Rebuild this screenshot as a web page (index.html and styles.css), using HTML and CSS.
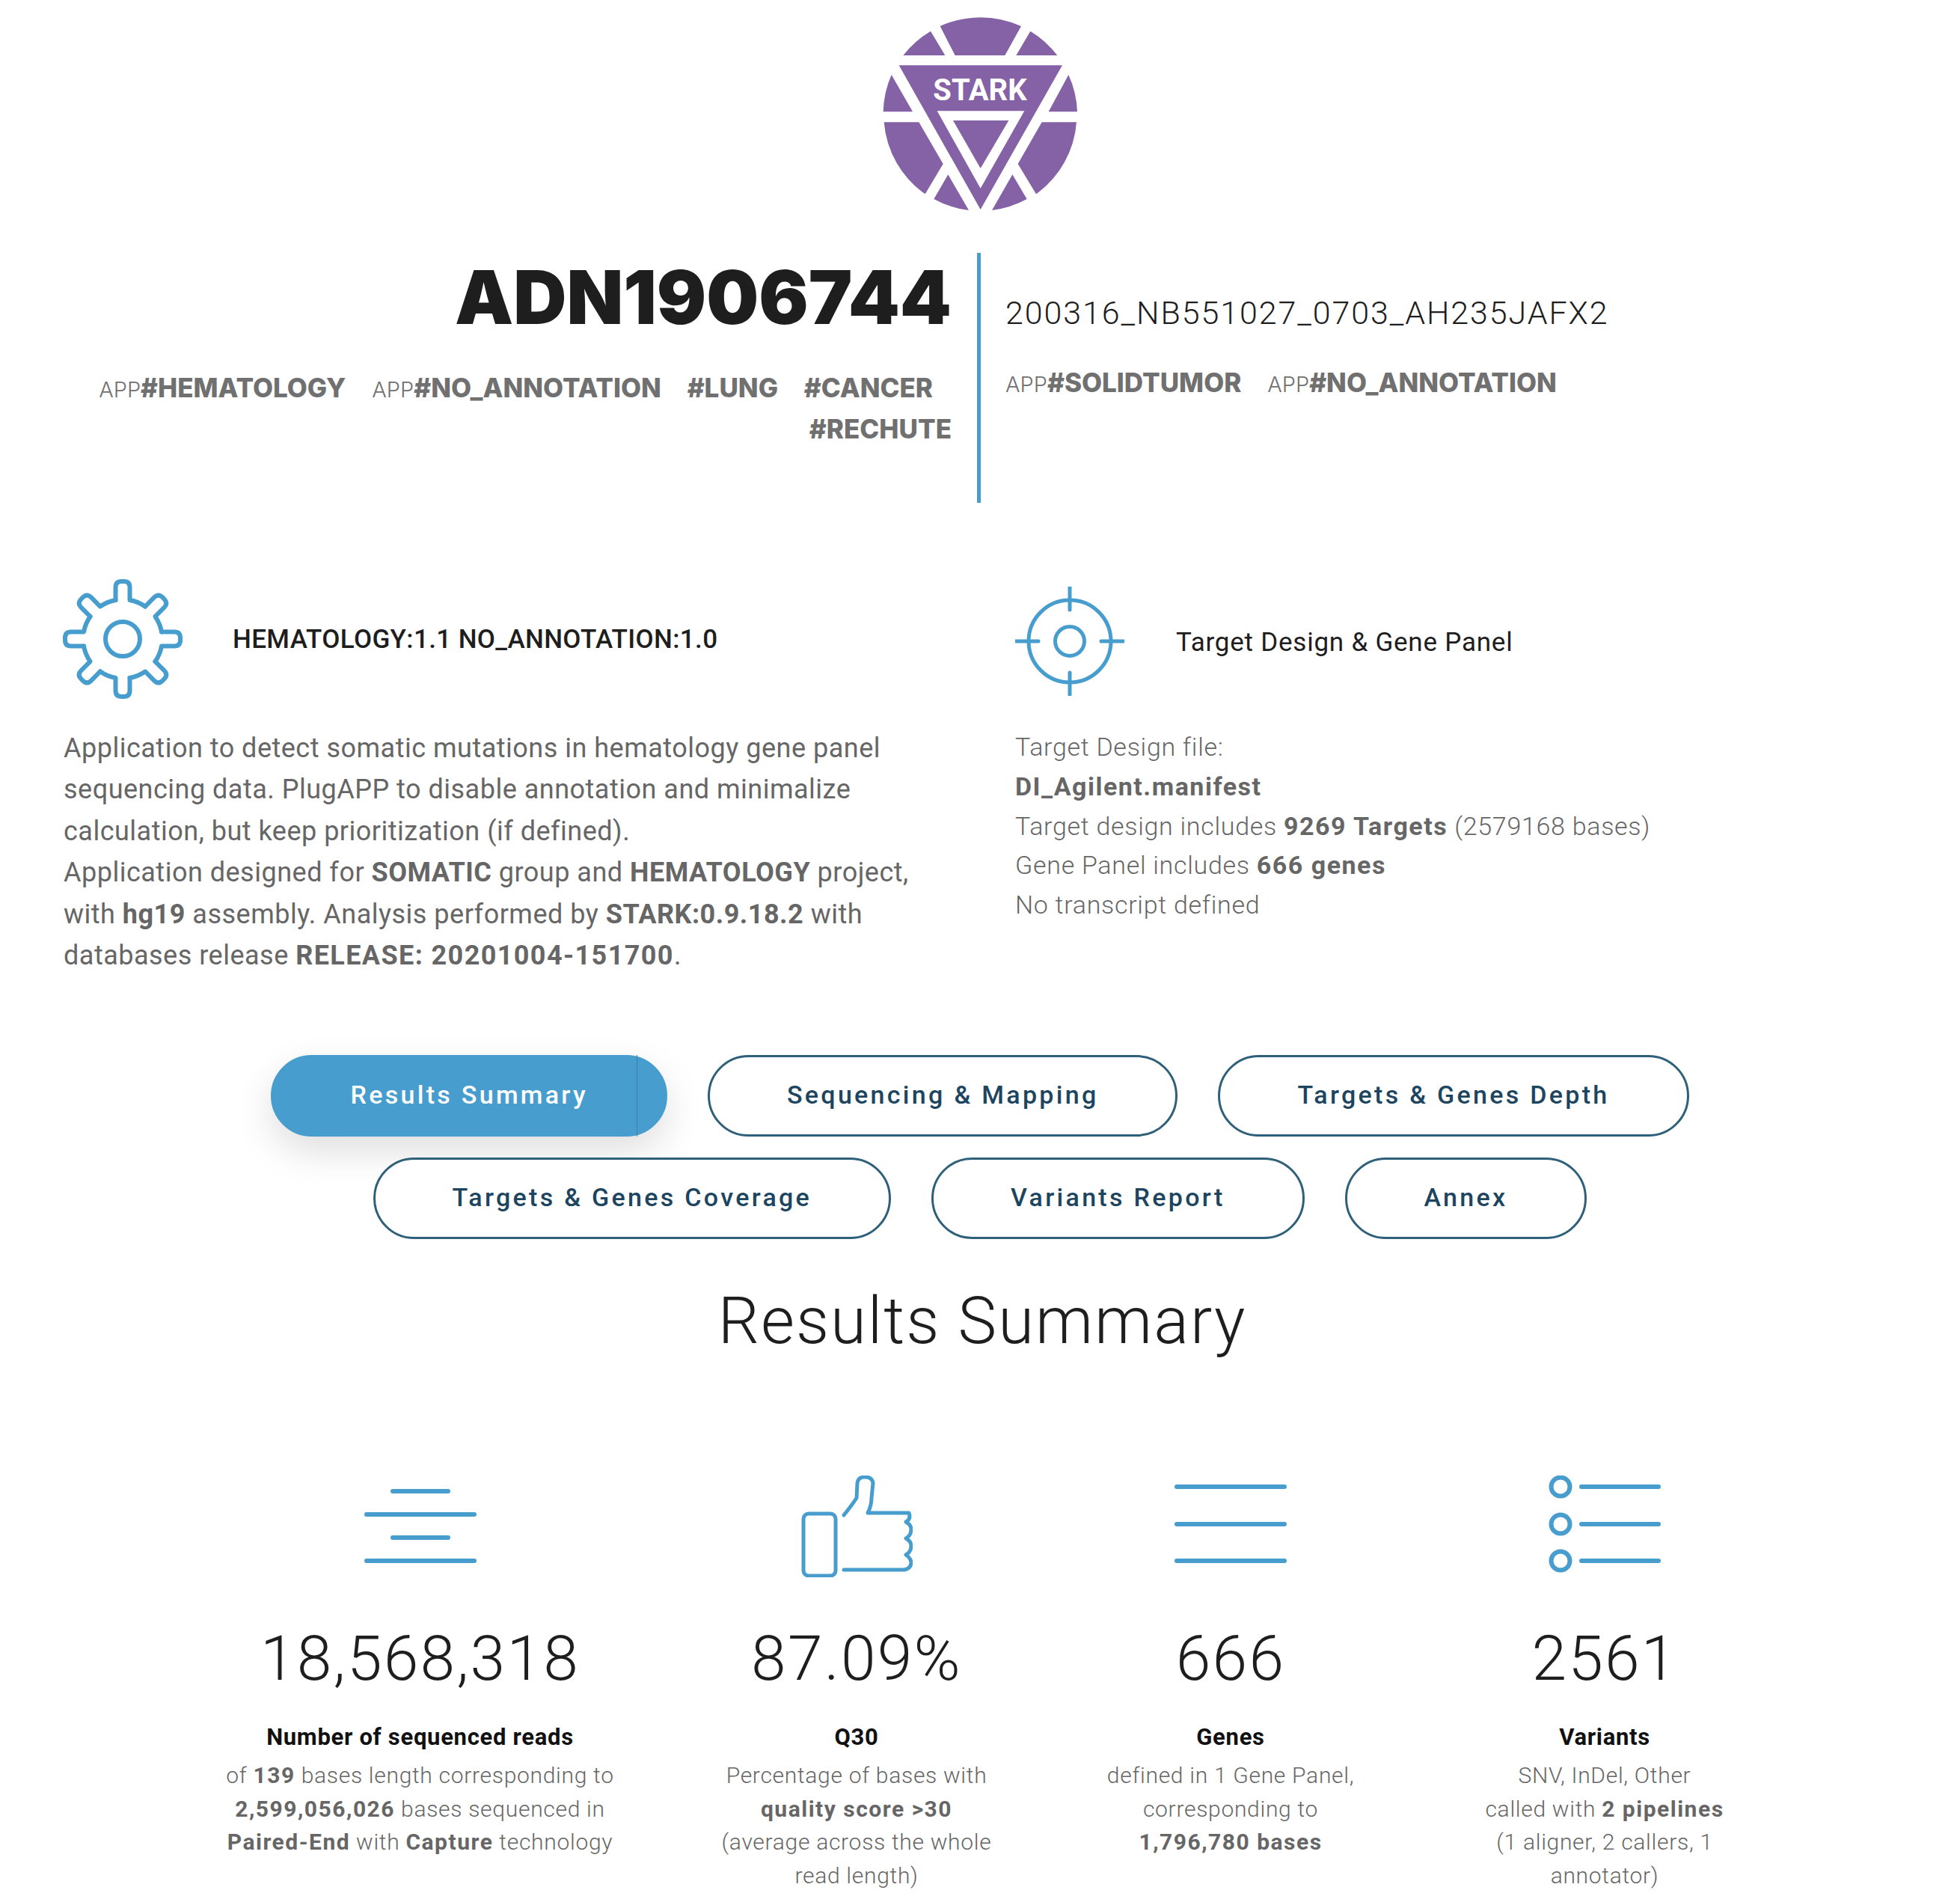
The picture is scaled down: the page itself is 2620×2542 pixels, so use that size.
FILE: index.html
```html
<!DOCTYPE html>
<html>
<head>
<title>STARK Report</title>
<link rel="stylesheet" href="styles.css">
</head>
<body>

<!-- logo -->
<svg class="logo" viewBox="0 0 1260 900">
  <g class="logo-shape">
    <path d="M470,105 A390,390 0 0 1 795,105 L730,222 L530,222 Z"/>
    <path d="M432,125 L490,222 L322,222 A390,390 0 0 1 432,125 Z"/>
    <path d="M832,125 A390,390 0 0 1 940,222 L775,222 Z"/>
    <path d="M275,300 L360,448 L242,448 A390,390 0 0 1 275,300 Z"/>
    <path d="M985,300 A390,390 0 0 1 1020,448 L905,448 Z"/>
    <path d="M245,490 L385,490 L482,657 L410,778 A390,390 0 0 1 245,490 Z"/>
    <path d="M1017,490 A390,390 0 0 1 855,778 L782,657 L878,490 Z"/>
    <path d="M502,700 L585,843 A390,390 0 0 1 445,798 Z"/>
    <path d="M760,700 L818,798 A390,390 0 0 1 678,843 Z"/>
    <path fill-rule="evenodd" d="M305,262 L960,262 L632,840 Z M458,445 L632,755 L808,445 Z"/>
    <path d="M522,483 L745,483 L632,675 Z"/>
  </g>
  <text class="logo-text" x="630" y="402" text-anchor="middle">STARK</text>
</svg>

<!-- sample header -->
<div class="head">
  <div class="head-left">
    <h1>ADN1906744</h1>
    <div class="tags">
      <span class="tag"><small>APP</small><b>#HEMATOLOGY</b></span>
      <span class="tag"><small>APP</small><b>#NO_ANNOTATION</b></span>
      <span class="tag"><b>#LUNG</b></span>
      <span class="tag"><b>#CANCER</b></span>
      <span class="tag"><b>#RECHUTE</b></span>
    </div>
  </div>
  <div class="head-right">
    <div class="run">200316_NB551027_0703_AH235JAFX2</div>
    <div class="tags tags-right">
      <span class="tag"><small>APP</small><b>#SOLIDTUMOR</b></span>
      <span class="tag"><small>APP</small><b>#NO_ANNOTATION</b></span>
    </div>
  </div>
</div>

<!-- application and design -->
<div class="info">
  <div class="info-left">
    <div class="info-title">
      <svg class="gear" viewBox="0 0 160 160">
        <defs>
          <path id="gear-seg" d="M-9.5,-52 L-9.5,-69 Q-9.5,-77 -1.5,-77 L1.5,-77 Q9.5,-77 9.5,-69 L9.5,-52 A53,53 0 0 1 30.05,-43.5"/>
        </defs>
        <g class="icon-line" transform="translate(80 80)">
          <use href="#gear-seg"/>
          <use href="#gear-seg" transform="rotate(45)"/>
          <use href="#gear-seg" transform="rotate(90)"/>
          <use href="#gear-seg" transform="rotate(135)"/>
          <use href="#gear-seg" transform="rotate(180)"/>
          <use href="#gear-seg" transform="rotate(225)"/>
          <use href="#gear-seg" transform="rotate(270)"/>
          <use href="#gear-seg" transform="rotate(315)"/>
          <circle r="23"/>
        </g>
      </svg>
      <b>HEMATOLOGY:1.1 NO_ANNOTATION:1.0</b>
    </div>
    <p class="desc">
      Application to detect somatic mutations in hematology gene panel<br>
      sequencing data. PlugAPP to disable annotation and minimalize<br>
      calculation, but keep prioritization (if defined).<br>
      Application designed for <b>SOMATIC</b> group and <b>HEMATOLOGY</b> project,<br>
      with <b>hg19</b> assembly. Analysis performed by <b>STARK:0.9.18.2</b> with<br>
      databases release <b class="release">RELEASE: 20201004-151700</b>.
    </p>
  </div>
  <div class="info-right">
    <div class="info-title info-title-right">
      <svg class="target" viewBox="0 0 146 146">
        <g class="icon-line icon-thin">
          <circle cx="73" cy="73" r="55"/>
          <circle cx="73" cy="73" r="19.5"/>
          <path d="M73,1 L73,31 M73,115 L73,145 M1,73 L31,73 M115,73 L145,73"/>
        </g>
      </svg>
      <span>Target Design &amp; Gene Panel</span>
    </div>
    <p class="design">
      Target Design file:<br>
      <b>DI_Agilent.manifest</b><br>
      Target design includes <b>9269 Targets</b> (2579168 bases)<br>
      Gene Panel includes <b>666 genes</b><br>
      No transcript defined
    </p>
  </div>
</div>

<!-- report tabs -->
<div class="tabs">
  <button class="tab active">Results Summary</button>
  <button class="tab">Sequencing &amp; Mapping</button>
  <button class="tab">Targets &amp; Genes Depth</button>
  <button class="tab">Targets &amp; Genes Coverage</button>
  <button class="tab">Variants Report</button>
  <button class="tab">Annex</button>
</div>

<h2>Results Summary</h2>

<div class="stats">
  <div class="stat">
    <svg class="stat-icon" viewBox="0 0 150 136">
      <g class="icon-line">
        <path d="M38,21 L112,21 M3,52 L147,52 M38,83 L112,83 M3,114 L147,114"/>
      </g>
    </svg>
    <div class="num">18,568,318</div>
    <div class="label">Number of sequenced reads</div>
    <div class="sub">of <b>139</b> bases length corresponding to<br><b>2,599,056,026</b> bases sequenced in<br><b>Paired-End</b> with <b>Capture</b> technology</div>
  </div>
  <div class="stat">
    <svg class="stat-icon" viewBox="0 0 150 136">
      <g class="icon-line icon-thin">
        <rect x="4" y="51" width="43" height="83" rx="7"/>
        <path d="M58,126 L139,126 Q148,124 148,116 Q147,110 141,106 Q148,102 148,94 Q148,88 141,84 Q148,80 148,72 Q148,66 141,62 Q148,58 145,50 L90,50 Q95,40 95,30 L97,10 Q96,2 86,2 Q77,2 76,10 L75,30 Q70,38 58,53"/>
      </g>
    </svg>
    <div class="num">87.09%</div>
    <div class="label">Q30</div>
    <div class="sub">Percentage of bases with<br><b>quality score &gt;30</b><br>(average across the whole<br>read length)</div>
  </div>
  <div class="stat">
    <svg class="stat-icon" viewBox="0 0 150 136">
      <g class="icon-line">
        <path d="M3,15 L147,15 M3,65 L147,65 M3,114 L147,114"/>
      </g>
    </svg>
    <div class="num">666</div>
    <div class="label">Genes</div>
    <div class="sub">defined in 1 Gene Panel,<br>corresponding to<br><b>1,796,780 bases</b></div>
  </div>
  <div class="stat">
    <svg class="stat-icon" viewBox="0 0 150 136">
      <g class="icon-line">
        <circle cx="16" cy="15" r="12.5"/>
        <circle cx="16" cy="65" r="12.5"/>
        <circle cx="16" cy="114" r="12.5"/>
        <path d="M44,15 L147,15 M44,65 L147,65 M44,114 L147,114"/>
      </g>
    </svg>
    <div class="num">2561</div>
    <div class="label">Variants</div>
    <div class="sub">SNV, InDel, Other<br>called with <b>2 pipelines</b><br>(1 aligner, 2 callers, 1<br>annotator)</div>
  </div>
</div>

</body>
</html>
```

FILE: styles.css
```css
:root {
  --blue: #479dcd;
  --grey: #666666;
  --dark: #1e1e1e;
  --navy: #1d4560;
}

body {
  margin: 0;
  background-color: #ffffff;
  color: var(--grey);
  font-family: Roboto, "Liberation Sans", sans-serif;
  font-weight: 300;
}

b {
  font-weight: 700;
}

/* Logo */
.logo {
  display: block;
  width: 420px;
  height: 300px;
  margin: 0 auto;
}

.logo-shape {
  fill: #8562a6;
}

.logo-text {
  fill: #ffffff;
  font-family: Roboto, sans-serif;
  font-size: 120px;
  font-weight: 700;
}

/* Header */
.head {
  display: flex;
  margin-top: 38px;
}

.head-left {
  box-sizing: border-box;
  width: 1311px;
  height: 334px;
  padding: 0 34px 0 100px;
  border-right: 5px solid var(--blue);
  text-align: right;
}

h1 {
  margin: 0;
  padding-top: 5px;
  padding-right: 0;
  color: var(--dark);
  font-family: Inter, sans-serif;
  font-size: 98.5px;
  font-weight: 900;
  line-height: 110px;
}

.tags {
  margin-top: 39px;
  font-family: Inter, sans-serif;
  font-size: 35px;
  line-height: 53px;
}

.tag {
  display: inline-block;
  margin-right: 25px;
  color: #707070;
}

.tag:last-child {
  margin-right: 0;
}

.tag small {
  font-size: 29px;
}

.tag b {
  font-weight: 800;
}

.head-right {
  padding-left: 33px;
}

.run {
  padding-top: 50px;
  color: var(--dark);
  font-size: 43px;
  line-height: 60px;
  letter-spacing: 1.9px;
}

.tags-right {
  margin-top: 37px;
}

/* Application and design */
.info {
  display: flex;
  margin-top: 102px;
}

.info-left {
  box-sizing: border-box;
  width: 1357px;
  padding-left: 85px;
}

.info-title {
  display: flex;
  align-items: center;
  gap: 67px;
  color: var(--dark);
  font-size: 35px;
  letter-spacing: 0.37px;
}

.info-title b {
  font-weight: 500;
}

.gear {
  width: 160px;
  height: 160px;
  margin-left: -1px;
}

.target {
  width: 146px;
  height: 146px;
}

.info-title-right {
  gap: 69px;
  padding-top: 10px;
  font-weight: 400;
  letter-spacing: 0.77px;
}

.info-title-right span {
  padding-top: 2px;
}

.icon-line {
  fill: none;
  stroke: var(--blue);
  stroke-width: 6;
  stroke-linecap: round;
  stroke-linejoin: round;
}

.icon-thin {
  stroke-width: 5;
}

.desc {
  margin: 39px 0 0;
  font-size: 36px;
  font-weight: 400;
  line-height: 55.4px;
  letter-spacing: 0.5px;
}

.desc .release {
  letter-spacing: 1.4px;
}

.design {
  margin: 42px 0 0;
  font-size: 34px;
  line-height: 52.8px;
  letter-spacing: 0.7px;
}

.design b {
  letter-spacing: 1.5px;
}

/* Tabs */
.tabs {
  display: flex;
  flex-wrap: wrap;
  justify-content: center;
  gap: 28px 54px;
  width: 2000px;
  margin: 105px auto 0;
}

.tab {
  position: relative;
  box-sizing: border-box;
  height: 109px;
  padding: 0 103px 3px;
  background-color: #ffffff;
  color: var(--navy);
  border: 3px solid #2f607a;
  border-radius: 55px;
  font-family: Roboto, sans-serif;
  font-size: 34px;
  font-weight: 500;
  letter-spacing: 3.3px;
}

.tab.active {
  background-color: var(--blue);
  border-color: var(--blue);
  color: #ffffff;
  box-shadow: 0 20px 50px rgba(0, 0, 0, 0.13);
}

.tab.active::after {
  content: "";
  position: absolute;
  top: -3px;
  bottom: -3px;
  right: 37px;
  width: 1px;
  background-color: #3c7ea5;
}

h2 {
  margin: 51px 0 0;
  padding-left: 6px;
  color: var(--dark);
  font-size: 87px;
  font-weight: 300;
  line-height: 116px;
  text-align: center;
  letter-spacing: 2px;
}

/* Stats */
.stats {
  display: grid;
  grid-template-columns: 667px 500px 500px 500px;
  justify-content: center;
  margin-top: 149px;
  padding-left: 3px;
  text-align: center;
}

.stat-icon {
  display: block;
  width: 150px;
  height: 136px;
  margin: 0 auto;
}

.num {
  margin-top: 59px;
  color: var(--dark);
  font-size: 84px;
  line-height: 100px;
  letter-spacing: 2.2px;
}

.label {
  margin-top: 33px;
  color: #111111;
  font-size: 31px;
  font-weight: 700;
  line-height: 44px;
  letter-spacing: 0.7px;
}

.sub {
  margin-top: 7px;
  font-size: 30px;
  font-weight: 300;
  line-height: 44.5px;
  letter-spacing: 0.7px;
}

.sub b {
  letter-spacing: 1.5px;
}
```
